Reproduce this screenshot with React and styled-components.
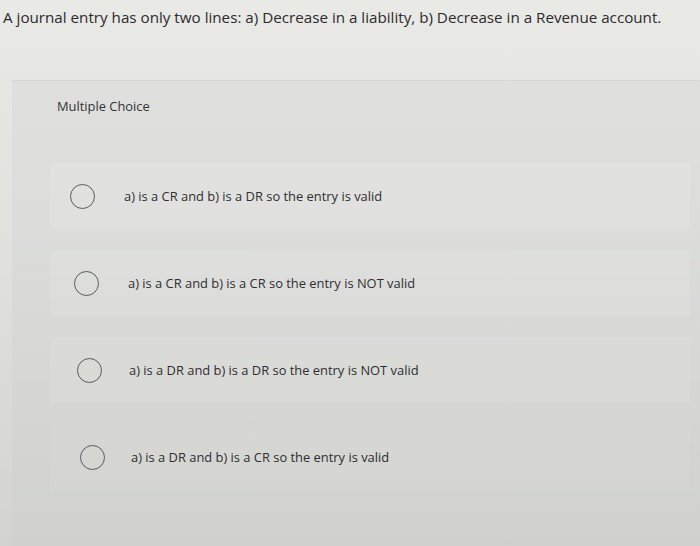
import styled, { createGlobalStyle } from "styled-components";

const GlobalStyle = createGlobalStyle`
  html, body {
    margin: 0;
    padding: 0;
  }
  body {
    width: 700px;
    height: 546px;
    overflow: hidden;
    font-family: "Open Sans", Lato, "Liberation Sans", sans-serif;
    color: #2e2e30;
    background: linear-gradient(180deg, #e9e9e6 0%, #e2e3df 40%, #d3d4d0 100%);
  }
`;

const Page = styled.div`
  width: 700px;
  height: 546px;
  display: flex;
  flex-direction: column;
`;

const Question = styled.h1`
  margin: 0;
  padding: 7px 0 0 3px;
  height: 80px;
  box-sizing: border-box;
  font-size: 15.2px;
  font-weight: 400;
  line-height: 20px;
  color: #2b2b2d;
`;

const Panel = styled.section`
  flex: 1;
  margin-left: 12px;
  padding: 17px 10px 0 45px;
  border-top: 1px solid #d6d6d2;
  background: linear-gradient(180deg, rgba(212, 214, 212, 0.4) 0%, rgba(200, 202, 198, 0.3) 100%);
  display: flex;
  flex-direction: column;
`;

const Kind = styled.div`
  font-size: 12.9px;
  line-height: 16px;
  color: #333335;
`;

const Choices = styled.ul`
  list-style: none;
  margin: 49px 0 0 -7px;
  padding: 0;
  display: flex;
  flex-direction: column;
  gap: 21px;
`;

const Choice = styled.li`
  height: 66px;
  display: flex;
  align-items: center;
  padding-left: ${(p) => 20 + p.$shift}px;
  background: rgba(255, 255, 255, ${(p) => p.$glow});
  cursor: pointer;
`;

const Radio = styled.span`
  width: 25px;
  height: 25px;
  flex: none;
  border: 1.6px solid #5a5b5e;
  border-radius: 50%;
  box-sizing: border-box;
`;

const Label = styled.span`
  margin-left: ${(p) => 29 + p.$gap}px;
  font-size: 12.9px;
  color: #2e2e31;
`;

const options = [
  { text: "a) is a CR and b) is a DR so the entry is valid", shift: 0, gap: 0, glow: 0.12 },
  { text: "a) is a CR and b) is a CR so the entry is NOT valid", shift: 4, gap: 0, glow: 0.1 },
  { text: "a) is a DR and b) is a DR so the entry is NOT valid", shift: 7, gap: -2, glow: 0.08 },
  { text: "a) is a DR and b) is a CR so the entry is valid", shift: 10, gap: -3, glow: 0.06 },
];

export default function App() {
  return (
    <Page>
      <GlobalStyle />
      <Question>
        A journal entry has only two lines: a) Decrease in a liability, b) Decrease in a Revenue account.
      </Question>
      <Panel>
        <Kind>Multiple Choice</Kind>
        <Choices>
          {options.map((o) => (
            <Choice key={o.text} $shift={o.shift} $glow={o.glow}>
              <Radio />
              <Label $gap={o.gap}>{o.text}</Label>
            </Choice>
          ))}
        </Choices>
      </Panel>
    </Page>
  );
}
